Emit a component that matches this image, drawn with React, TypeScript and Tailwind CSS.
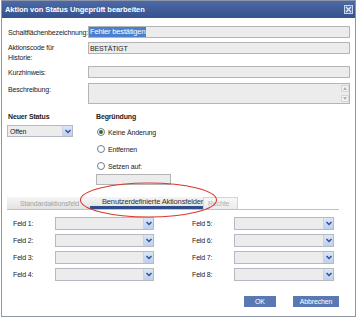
import React from "react";

const Chevron = () => (
  <svg width="6" height="5" viewBox="0 0 6 5">
    <path d="M0.5 1 L3 3.6 L5.5 1" fill="none" stroke="#2d4f9a" strokeWidth="1.4" />
  </svg>
);

const Select = ({ w, h = 13, text }: { w: string; h?: number; text?: string }) => (
  <div className={`${w} flex border border-[#b4b9c2] bg-[#ececec]`} style={{ height: h }}>
    <div className="flex-1 flex items-center pl-[2px] text-[#222]">{text}</div>
    <div className="w-[10px] flex items-center justify-center bg-gradient-to-b from-[#dbe5f5] to-[#bfd0ec] border-l border-[#c8d2e2]">
      <Chevron />
    </div>
  </div>
);

const Radio = ({ checked, label }: { checked?: boolean; label: string }) => (
  <div className="flex items-center h-[10px]">
    <div className="w-[8px] h-[8px] rounded-full border border-[#6f7d8f] bg-white flex items-center justify-center ml-[1px]">
      {checked && <div className="w-[4px] h-[4px] rounded-full bg-[#2f6a2f]" />}
    </div>
    <span className="ml-[3px]">{label}</span>
  </div>
);

const FeldRow = ({ a, b }: { a: string; b: string }) => (
  <div className="flex items-center h-[13px]">
    <div className="ml-[5px] w-[42px]">{a}</div>
    <Select w="w-[99px]" />
    <div className="ml-[38px] w-[42px]">{b}</div>
    <Select w="w-[100px]" />
  </div>
);

export default function App() {
  return (
    <div className="w-[357px] h-[318px] bg-white relative font-['Liberation_Sans',Arial,sans-serif] text-[7px] tracking-[-0.15px] text-[#222] leading-none">
      <div className="ml-px w-[355px] h-[317px] border border-[#8d96a8] flex flex-col">
        <div className="h-[17px] bg-gradient-to-b from-[#4c69a7] to-[#36528d] flex items-center justify-between pl-[3px] pr-[2px]">
          <span className="text-white font-bold text-[7.5px] tracking-[-0.05px]">Aktion von Status Ungeprüft bearbeiten</span>
          <div className="w-[9px] h-[9px] border border-[#c9d3e6] bg-[#5b76ad] flex items-center justify-center">
            <svg width="7" height="7" viewBox="0 0 7 7">
              <path d="M1 1 L6 6 M6 1 L1 6" stroke="#e8eef8" strokeWidth="1.1" />
            </svg>
          </div>
        </div>

        <div className="flex-1 flex flex-col pl-[6px] pr-[5px]">
          <div className="mt-[8px] flex items-center h-[12px]">
            <div className="w-[80px] whitespace-nowrap">Schaltflächenbezeichnung:</div>
            <div className="flex-1 h-[12px] border border-[#b4b4b4] bg-[#ececec] flex items-center">
              <span className="bg-[#4d7fcc] text-white px-[1px] h-[10px] flex items-center text-[7.5px]">Fehler bestätigen</span>
            </div>
          </div>

          <div className="mt-[4px] flex items-start">
            <div className="w-[80px] leading-[10px] pt-[1px]">
              Aktionscode für
              <br />
              Historie:
            </div>
            <div className="flex-1 h-[12px] border border-[#b4b4b4] bg-[#ececec] flex items-center pl-[1px]">BESTÄTIGT</div>
          </div>

          <div className="mt-[3px] flex items-center h-[12px]">
            <div className="w-[80px]">Kurzhinweis:</div>
            <div className="flex-1 h-[12px] border border-[#b4b4b4] bg-[#ececec]" />
          </div>

          <div className="mt-[5px] flex items-start">
            <div className="w-[80px] pt-[3px]">Beschreibung:</div>
            <div className="flex-1 h-[21px] border border-[#b4b4b4] bg-[#ececec] flex justify-end">
              <div className="w-[8px] flex flex-col justify-between py-[1px]">
                <div className="h-[7px] border border-[#d6d6d6] bg-[#f2f2f2] flex items-center justify-center">
                  <svg width="4" height="3" viewBox="0 0 4 3"><path d="M0 3 L2 0 L4 3Z" fill="#b0b0b0" /></svg>
                </div>
                <div className="h-[7px] border border-[#d6d6d6] bg-[#f2f2f2] flex items-center justify-center">
                  <svg width="4" height="3" viewBox="0 0 4 3"><path d="M0 0 L2 3 L4 0Z" fill="#b0b0b0" /></svg>
                </div>
              </div>
            </div>
          </div>

          <div className="mt-[6px] flex">
            <div className="w-[88px] flex flex-col">
              <div className="h-[12px] flex items-center font-bold">Neuer Status</div>
              <div className="mt-[3px] -ml-px">
                <Select w="w-[66px]" h={12} text="Offen" />
              </div>
            </div>
            <div className="flex flex-col">
              <div className="h-[12px] flex items-center font-bold">Begründung</div>
              <div className="mt-[5px] flex flex-col gap-[7px]">
                <Radio checked label="Keine Änderung" />
                <Radio label="Entfernen" />
                <Radio label="Setzen auf:" />
              </div>
              <div className="mt-[3px] w-[75px] h-[11px] border border-[#b4b4b4] bg-[#ececec]" />
            </div>
          </div>

          <div className="mt-[12px] -ml-px w-[332px] h-[13px] flex border-b border-[#b9c2d3]">
            <div className="w-[83px] bg-gradient-to-b from-[#f6f6f6] to-[#e3e3e3] flex items-center pl-[13px] text-[#a3a3a3] overflow-hidden whitespace-nowrap">
              Standardaktionsfeld
            </div>
            <div className="w-[113px] bg-gradient-to-b from-[#f4f4f4] to-[#e6e6e6] border-b-[3px] border-[#2f4d8b] flex items-center pl-[12px] text-[#333] whitespace-nowrap text-[7.5px]">
              Benutzerdefinierte Aktionsfelder
            </div>
            <div className="w-[35px] bg-gradient-to-b from-[#f8f8f8] to-[#ebebeb] border-x border-t border-[#d4d4d4] flex items-center pl-[4px] text-[#b3b3b3]">
              Rechte
            </div>
          </div>

          <div className="mt-[7px] flex flex-col gap-[4px]">
            <FeldRow a="Feld 1:" b="Feld 5:" />
            <FeldRow a="Feld 2:" b="Feld 6:" />
            <FeldRow a="Feld 3:" b="Feld 7:" />
            <FeldRow a="Feld 4:" b="Feld 8:" />
          </div>

          <div className="mt-[15px] flex justify-end gap-[17px] mr-[11px]">
            <div className="w-[32px] h-[11px] bg-[#5a79b3] text-white flex items-center justify-center">OK</div>
            <div className="w-[46px] h-[11px] bg-[#5a79b3] text-white flex items-center justify-center">Abbrechen</div>
          </div>
        </div>
      </div>

      <svg className="absolute left-0 top-0 pointer-events-none" width="357" height="318">
        <ellipse cx="148.5" cy="200" rx="68" ry="17" fill="none" stroke="#d9362c" strokeWidth="1.1" />
      </svg>
    </div>
  );
}
